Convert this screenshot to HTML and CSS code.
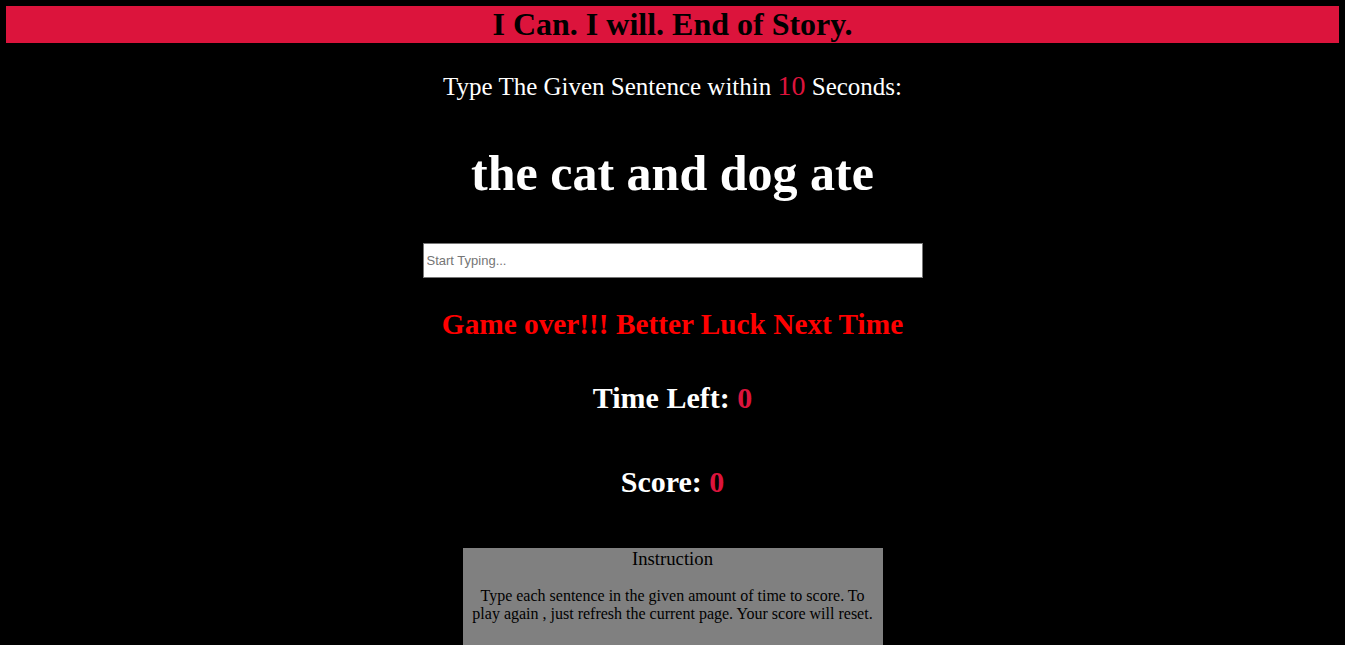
FILE: index.html
```html
<!DOCTYPE html>
<html>
<head>
<meta charset="utf-8">
<link rel="stylesheet" href="styles.css">
</head>
<body>
<header class="banner">I Can. I will. End of Story.</header>
<main class="game">
  <p class="prompt">Type The Given Sentence within <span class="secs">10</span> Seconds:</p>
  <h2 class="sentence">the cat and dog ate</h2>
  <input class="typing" type="text" placeholder="Start Typing...">
  <h3 class="message">Game over!!! Better Luck Next Time</h3>
  <h3 class="stat">Time Left: <span class="num">0</span></h3>
  <h3 class="stat stat-score">Score: <span class="num">0</span></h3>
  <section class="instructions">
    <h4 class="ins-title">Instruction</h4>
    <p class="ins-text">Type each sentence in the given amount of time to score. To play again , just refresh the current page. Your score will reset.</p>
  </section>
</main>
</body>
</html>
```
FILE: styles.css
```css
html, body {
  margin: 0;
  padding: 0;
  background: #000;
}
body {
  padding: 6px;
  font-family: "Liberation Serif", "Times New Roman", serif;
  color: #fff;
  overflow: hidden;
}
.banner {
  background: #dc143c;
  color: #000;
  font-weight: bold;
  font-size: 32px;
  height: 37px;
  line-height: 37px;
  text-align: center;
}
.game {
  display: flex;
  flex-direction: column;
  align-items: center;
  text-align: center;
}
.prompt {
  font-size: 25px;
  margin: 29px 0 0;
  line-height: 28px;
}
.secs {
  color: #dc143c;
  font-size: 28px;
}
.sentence {
  font-size: 50px;
  font-weight: bold;
  margin: 43px 0 0;
  line-height: 58px;
}
.typing {
  margin-top: 41px;
  width: 500px;
  height: 35px;
  box-sizing: border-box;
  border: 1px solid #767676;
  padding: 0 3px;
  font-family: "Liberation Sans", Arial, sans-serif;
  font-size: 13px;
  background: #fff;
  outline: none;
}
.typing::placeholder {
  color: #757575;
}
.message {
  color: #ff0000;
  font-size: 29.3px;
  margin: 29px 0 0;
  line-height: 35px;
}
.stat {
  font-size: 30px;
  margin: 38px 0 0;
  line-height: 36px;
}
.stat-score {
  margin-top: 48px;
}
.num {
  color: #dc143c;
}
.instructions {
  margin-top: 48px;
  width: 420px;
  background: #808080;
  color: #000;
  padding-bottom: 40px;
}
.ins-title {
  font-size: 18.7px;
  font-weight: normal;
  margin: 0;
  line-height: 22px;
}
.ins-text {
  font-size: 16px;
  margin: 17px 8px 0;
}
```
